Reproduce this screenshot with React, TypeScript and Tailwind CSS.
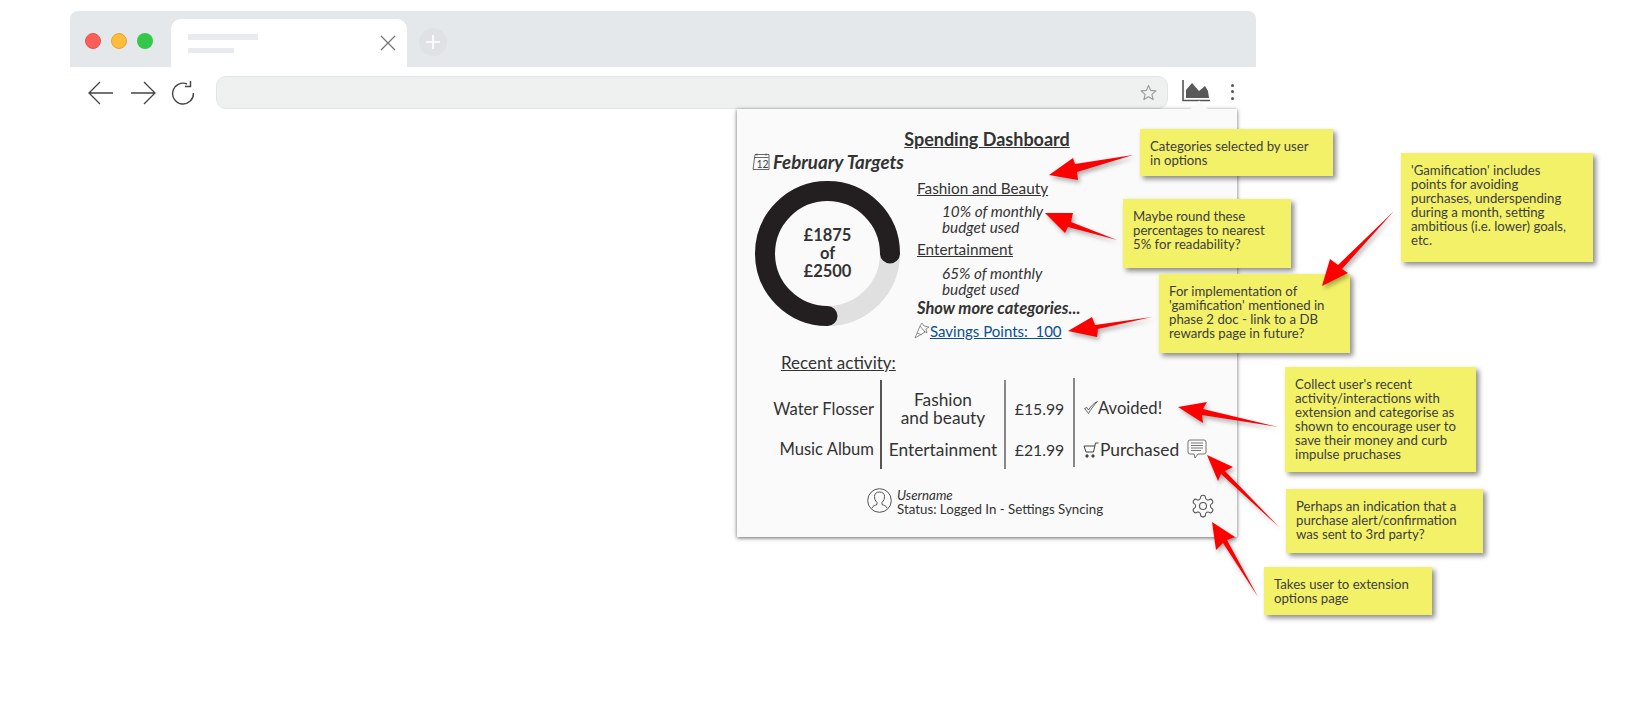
const notes = [
  { left: "left-[1140px]", top: "top-[129px]", w: "w-[193px]", h: "h-[47px]", lines: ["Categories selected by user", "in options"] },
  { left: "left-[1123px]", top: "top-[199px]", w: "w-[168px]", h: "h-[69px]", lines: ["Maybe round these", "percentages to nearest", "5% for readability?"] },
  { left: "left-[1159px]", top: "top-[274px]", w: "w-[191px]", h: "h-[79px]", lines: ["For implementation of", "'gamification' mentioned in", "phase 2 doc - link to a DB", "rewards page in future?"] },
  { left: "left-[1401px]", top: "top-[153px]", w: "w-[192px]", h: "h-[109px]", lines: ["'Gamification' includes", "points for avoiding", "purchases, underspending", "during a month, setting", "ambitious (i.e. lower) goals,", "etc."] },
  { left: "left-[1285px]", top: "top-[367px]", w: "w-[191px]", h: "h-[105px]", lines: ["Collect user's recent", "activity/interactions with", "extension and categorise as", "shown to encourage user to", "save their money and curb", "impulse pruchases"] },
  { left: "left-[1286px]", top: "top-[489px]", w: "w-[197px]", h: "h-[64px]", lines: ["Perhaps an indication that a", "purchase alert/confirmation", "was sent to 3rd party?"] },
  { left: "left-[1264px]", top: "top-[567px]", w: "w-[168px]", h: "h-[48px]", lines: ["Takes user to extension", "options page"] },
];

const arrows = [
  "1049,175 1073,158 1075,164 1133,155 1077,172 1078,180",
  "1045,213 1073,213 1071,222 1117,240 1068,227 1065,233",
  "1068,331 1092,317 1095,325 1152,317 1098,329 1097,337",
  "1322,286 1330,259 1338,265 1394,211 1342,269 1348,273",
  "1178,407 1207,402 1203,409 1278,427 1202,415 1203,423",
  "1207,455 1233,467 1225,471 1279,527 1221,474 1218,481",
  "1212,522 1235,537 1227,540 1258,597 1223,543 1216,550",
];

function Note({ n }: { n: (typeof notes)[number] }) {
  return (
    <div className={`absolute ${n.left} ${n.top} ${n.w} ${n.h} bg-[#f3f168] pl-[10px] pt-[10px] text-[13.2px] leading-[14px] text-[#3d3d3d] shadow-[3px_3px_5px_rgba(0,0,0,0.45)]`}>
      {n.lines.map((l) => (
        <div key={l} className="whitespace-nowrap">{l}</div>
      ))}
    </div>
  );
}

function Cell({ h, className, children }: { h: string; className?: string; children: React.ReactNode }) {
  return <div className={`flex items-center ${h} ${className ?? ""}`}>{children}</div>;
}

export default function App() {
  return (
    <div className="relative h-[726px] w-[1643px] overflow-hidden bg-white font-['Lato','Liberation_Sans',sans-serif] text-[#333]">
      {/* browser chrome */}
      <div className="ml-[70px] w-[1186px] pt-[11px]">
        <div className="flex h-[56px] items-end rounded-t-[8px] bg-[#e5e8eb] pl-[15px]">
          <div className="mb-[18px] mr-[10px] flex gap-[10px]">
            <span className="h-[16px] w-[16px] rounded-full border border-[#e5534f] bg-[#fd5f58]" />
            <span className="h-[16px] w-[16px] rounded-full border border-[#e8a338] bg-[#febc3a]" />
            <span className="h-[16px] w-[16px] rounded-full bg-[#34c749]" />
          </div>
          <div className="ml-[8px] flex h-[48px] w-[236px] items-center rounded-t-[10px] bg-white pl-[17px] pr-[10px]">
            <div className="flex flex-col gap-[8px]">
              <div className="h-[6px] w-[70px] bg-[#e8ebed]" />
              <div className="h-[5px] w-[46px] bg-[#e8ebed]" />
            </div>
            <svg className="ml-auto mr-[1px] h-[16px] w-[16px]" viewBox="0 0 16 16" stroke="#777" strokeWidth="1.3" fill="none">
              <path d="M1 1l14 14M15 1L1 15" />
            </svg>
          </div>
          <div className="mb-[11px] ml-[12px] flex h-[28px] w-[28px] items-center justify-center rounded-full bg-[#dfe1e4]">
            <svg className="h-[16px] w-[16px]" viewBox="0 0 16 16" stroke="#fff" strokeWidth="1.6">
              <path d="M8 1v14M1 8h14" />
            </svg>
          </div>
        </div>
        <div className="flex h-[41px] items-center pt-[10px]">
          <svg className="ml-[18px] h-[26px] w-[26px]" viewBox="0 0 26 26" fill="none" stroke="#444" strokeWidth="1.3">
            <path d="M25 13H1M12 2L1 13l11 11" />
          </svg>
          <svg className="ml-[16px] h-[26px] w-[26px]" viewBox="0 0 26 26" fill="none" stroke="#444" strokeWidth="1.3">
            <path d="M1 13h24M14 2l11 11-11 11" />
          </svg>
          <svg className="ml-[15px] h-[24px] w-[24px]" viewBox="0 0 24 24" fill="none" stroke="#444" strokeWidth="1.4">
            <path d="M16 3A10.400 10.400 0 1 0 22.400 12" />
            <path d="M19.500 0V5.500H14" strokeWidth="1.400" />
          </svg>
          <div className="ml-[21px] flex h-[33px] w-[952px] items-center justify-end rounded-[10px] border border-[#e2e5e7] bg-[#eff1f1] pr-[10px]">
            <svg className="h-[17px] w-[17px]" viewBox="0 0 24 24" fill="none" stroke="#9a9a9a" strokeWidth="1.6" strokeLinejoin="round">
              <path d="M12 2l3 7 7.500.7-5.700 5 1.700 7.300-6.500-3.900L5.500 22l1.700-7.300-5.700-5L9 9z" />
            </svg>
          </div>
          <svg className="mb-[4px] ml-[14px] h-[22px] w-[28px]" viewBox="0 0 28 22">
            <path d="M1 0v20.500h27" fill="none" stroke="#555" strokeWidth="1.600" />
            <path d="M4 18V10l6-7 7 8 6-5 3 5 1 7z" fill="#595959" />
          </svg>
          <div className="ml-[21px] flex flex-col gap-[3.500px] pb-[2px]">
            <span className="h-[3px] w-[3px] rounded-full bg-[#555]" />
            <span className="h-[3px] w-[3px] rounded-full bg-[#555]" />
            <span className="h-[3px] w-[3px] rounded-full bg-[#555]" />
          </div>
        </div>
      </div>

      {/* extension popup */}
      <div className="relative ml-[737px] mt-[1px] h-[428px] w-[500px] bg-[#fafafa] pt-[20px] shadow-[0_1px_4px_rgba(0,0,0,0.6)]">
        <div className="absolute -top-[6px] left-[456px] h-[12px] w-[12px] rotate-45 bg-[#fafafa]" />
        <div className="relative text-center text-[18px] font-bold leading-[20px] underline">Spending Dashboard</div>
        <div className="mt-[3px] flex h-[20px] items-center pl-[15px]">
          <svg className="h-[18px] w-[18px]" viewBox="0 0 18 18" fill="none" stroke="#444" strokeWidth="0.800">
            <path d="M3 1.500h14v15H1z" />
            <path d="M5 .5v2M14 .5v2M2.500 4.500h14" />
            <text x="4.500" y="14.500" fontSize="10.500" fill="#444" stroke="none">12</text>
          </svg>
          <span className="ml-[3px] text-[18.700px] font-bold italic">February Targets</span>
        </div>

        <div className="mt-[9px] flex">
          <div className="ml-[18px] h-[145px] w-[145px]">
            <div className="relative h-[145px] w-[145px]">
              <svg className="h-[145px] w-[145px]" viewBox="0 0 145 145" fill="none" strokeWidth="20">
                <circle cx="72.500" cy="72.500" r="62.500" stroke="#e0e0e0" />
                <path d="M72.500 135A62.500 62.500 0 1 1 135 72.500" stroke="#231f20" strokeLinecap="round" />
              </svg>
              <div className="absolute inset-0 flex flex-col items-center justify-center pb-[1px] text-[16.500px] font-bold leading-[18px]">
                <span>£1875</span>
                <span>of</span>
                <span>£2500</span>
              </div>
            </div>
          </div>
          <div className="-mt-[1px] ml-[17px] text-[15.300px] leading-[16px]">
            <div className="underline">Fashion and Beauty</div>
            <div className="mt-[7px] pl-[25px] italic">
              <div>10% of monthly</div>
              <div>budget used</div>
            </div>
            <div className="mt-[6px] underline">Entertainment</div>
            <div className="mt-[8px] pl-[25px] italic">
              <div>65% of monthly</div>
              <div>budget used</div>
            </div>
            <div className="mt-[3px] text-[16.500px] font-bold italic">Show more categories...</div>
            <div className="-ml-[3px] mt-[6px] flex items-center text-[15px]">
              <svg className="h-[17px] w-[16px]" viewBox="0 0 16 17" fill="none" stroke="#777" strokeWidth="0.800">
                <path d="M1 16L6 4l5 6zM3 11l5 2M6 4l2-3 2 3 5 1-3 2 1 4-3-2" />
              </svg>
              <span className="text-[#0b4f8f] underline">Savings Points:&nbsp; 100</span>
            </div>
          </div>
        </div>

        <div className="mt-[14px] pl-[44px] text-[17px] leading-[20px] underline">Recent activity:</div>

        <div className="mt-[7px] flex text-[16.600px] leading-[18px]">
          <div className="h-[89px] w-[145px] border-r-2 border-[#555] pr-[6px] text-right">
            <Cell h="h-[58px]" className="justify-end">Water Flosser</Cell>
            <Cell h="h-[22px]" className="justify-end">Music Album</Cell>
          </div>
          <div className="h-[89px] w-[124px] border-r-2 border-[#888] text-[17.300px]">
            <Cell h="h-[58px]" className="justify-center text-center">
              <span>Fashion<br />and beauty</span>
            </Cell>
            <Cell h="h-[24px]" className="justify-center">Entertainment</Cell>
          </div>
          <div className="h-[89px] w-[67px] text-[15.800px]">
            <Cell h="h-[58px]" className="justify-center">£15.99</Cell>
            <Cell h="h-[24px]" className="justify-center">£21.99</Cell>
          </div>
          <div className="-mt-[2px] h-[89px] border-l-2 border-[#888] pl-[8px]">
            <Cell h="h-[59px]">
              <svg className="h-[15px] w-[15px]" viewBox="0 0 15 15" fill="none" stroke="#555" strokeWidth="0.900">
                <path d="M1.500 8.500 4 7.500 5.500 10C8 6 11 3 14.500 1.500 11 5 8 9 5.500 13.500 4 11.500 3 10 1.500 8.500z" />
              </svg>
              <span>Avoided!</span>
            </Cell>
            <Cell h="h-[26px]">
              <svg className="h-[16px] w-[16px]" viewBox="0 0 16 16" fill="none" stroke="#444" strokeWidth="1">
                <path d="M15.500 1h-3l-2 9H3L1 4h11" />
                <circle cx="4" cy="14" r="1.200" fill="#444" />
                <circle cx="10" cy="14" r="1.200" fill="#444" />
              </svg>
              <span className="ml-[1px] text-[17.400px]">Purchased</span>
              <svg className="-mt-[2px] ml-[8px] h-[20px] w-[20px]" viewBox="0 0 20 20" fill="none" stroke="#666" strokeWidth="0.900">
                <path d="M3 1h14a2 2 0 0 1 2 2v10a2 2 0 0 1-2 2H11l-3 4-1-4H3a2 2 0 0 1-2-2V3a2 2 0 0 1 2-2z" />
                <path d="M4 4h12M4 6.500h12M4 9h12M4 11.500h10" />
              </svg>
            </Cell>
          </div>
        </div>

        <div className="mt-[12px] flex items-center">
          <svg className="ml-[130px] h-[25px] w-[25px]" viewBox="0 0 25 25" fill="none" stroke="#555" strokeWidth="1">
            <circle cx="12.500" cy="12.500" r="11.800" />
            <path d="M5 20c1-2.500 3-2.500 5-3.500v-2c-2-2-2.500-4-2.500-6 0-3 2-4.500 5-4.500s5 1.500 5 4.500c0 2-.5 4-2.500 6v2c2 1 4 1 5 3.500" />
          </svg>
          <div className="ml-[5px] mt-[4px] text-[13.300px] leading-[14px]">
            <div className="italic">Username</div>
            <div>Status: Logged In - Settings Syncing</div>
          </div>
          <svg className="ml-auto mr-[21px] mt-[12px] h-[26px] w-[26px]" viewBox="0 0 24 24" fill="none" stroke="#555" strokeWidth="1">
            <path d="M12.220 2h-.44a2 2 0 0 0-2 2v.18a2 2 0 0 1-1 1.730l-.43.250a2 2 0 0 1-2 0l-.15-.080a2 2 0 0 0-2.730.730l-.220.380a2 2 0 0 0 .730 2.730l.150.100a2 2 0 0 1 1 1.720v.510a2 2 0 0 1-1 1.740l-.150.090a2 2 0 0 0-.730 2.730l.220.380a2 2 0 0 0 2.730.730l.150-.080a2 2 0 0 1 2 0l.430.250a2 2 0 0 1 1 1.730V20a2 2 0 0 0 2 2h.440a2 2 0 0 0 2-2v-.180a2 2 0 0 1 1-1.730l.430-.250a2 2 0 0 1 2 0l.150.080a2 2 0 0 0 2.730-.730l.220-.390a2 2 0 0 0-.730-2.730l-.150-.080a2 2 0 0 1-1-1.740v-.500a2 2 0 0 1 1-1.740l.150-.090a2 2 0 0 0 .730-2.730l-.220-.380a2 2 0 0 0-2.730-.730l-.150.080a2 2 0 0 1-2 0l-.430-.250a2 2 0 0 1-1-1.730V4a2 2 0 0 0-2-2z" />
            <circle cx="12" cy="12" r="3.200" />
          </svg>
        </div>
      </div>

      {/* annotations */}
      {notes.map((n) => (
        <Note key={n.lines[0]} n={n} />
      ))}
      <svg className="pointer-events-none absolute left-0 top-0 h-[726px] w-[1643px]" viewBox="0 0 1643 726">
        {arrows.map((p) => (
          <polygon key={p} points={p} fill="#fe0000" className="drop-shadow-[2px_3px_2px_rgba(0,0,0,0.3)]" />
        ))}
      </svg>
    </div>
  );
}
